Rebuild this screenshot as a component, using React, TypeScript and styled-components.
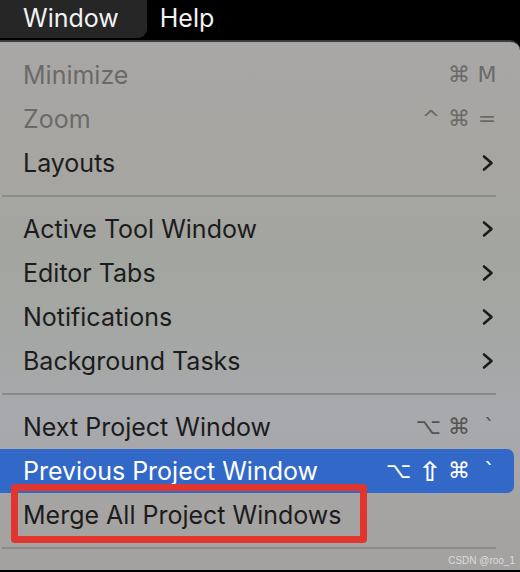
import React from 'react'
import styled, { createGlobalStyle } from 'styled-components'

const GlobalStyle = createGlobalStyle`
    html, body {
        margin: 0;
        padding: 0;
        background: #000;
    }
    body {
        font-family: 'Inter', 'Liberation Sans', sans-serif;
        -webkit-font-smoothing: antialiased;
    }
`

const Screen = styled.div`
    position: relative;
    width: 520px;
    height: 572px;
    overflow: hidden;
    background: #000;
`

const MenuBar = styled.div`
    height: 40px;
    display: flex;
    align-items: flex-start;
    background: #000;
`

const BarItem = styled.div<{ $active?: boolean }>`
    height: 38px;
    display: flex;
    align-items: center;
    padding-bottom: 2px;
    box-sizing: border-box;
    font-size: 25px;
    color: #f2f2f2;
    background: ${p => (p.$active ? '#262626' : 'transparent')};
    border-bottom-right-radius: 9px;
    padding-right: ${p => (p.$active ? '28px' : '14px')};
    padding-left: ${p => (p.$active ? '23px' : '13px')};
`

const Menu = styled.div`
    border-top: 2px solid #3a3a3c;
    border-top-right-radius: 10px;
    background: linear-gradient(
        180deg,
        #a9a7a5 0%,
        #a6a5a2 25%,
        #a3a59f 40%,
        #a6a8a8 62%,
        #a8a9ad 72%,
        #a5a4a3 88%,
        #a4a2a0 100%
    );
    padding-top: 11px;
    height: 530px;
    box-sizing: border-box;
`

const Row = styled.div<{ $disabled?: boolean; $selected?: boolean }>`
    height: 44px;
    display: flex;
    align-items: center;
    justify-content: space-between;
    padding: 0 17px 0 23px;
    margin-right: 6px;
    font-size: 25px;
    color: ${p => (p.$selected ? '#ffffff' : p.$disabled ? '#6b6a69' : '#1c1c1c')};
    background: ${p => (p.$selected ? '#3268c8' : 'transparent')};
    border-radius: ${p => (p.$selected ? '0 7px 7px 0' : '0')};
`

const Shortcut = styled.span<{ $disabled?: boolean; $selected?: boolean }>`
    display: flex;
    align-items: center;
    gap: 7px;
    font-family: 'DejaVu Sans', sans-serif;
    font-size: 22px;
    color: ${p => (p.$selected ? '#ffffff' : p.$disabled ? '#6b6a69' : '#555453')};
`

const Key = styled.span<{ $kind?: 'tick' | 'shift' }>`
    display: inline-block;
    text-align: ${p => (p.$kind === 'tick' ? 'left' : 'center')};
    min-width: ${p => (p.$kind === 'tick' ? '13px' : '20px')};
    margin-left: ${p => (p.$kind === 'tick' ? '7px' : '0')};
    font-size: ${p => (p.$kind === 'shift' ? '27px' : 'inherit')};
    font-weight: ${p => (p.$kind === 'shift' ? 'bold' : 'normal')};
    line-height: 1;
`

const Chevron = styled.svg`
    width: 14px;
    height: 18px;
    margin-right: 2px;
`

const Separator = styled.div`
    height: 2px;
    margin: 10px 24px 10px 2px;
    background: #8c8b89;
`

const Highlight = styled.div`
    position: absolute;
    left: 11px;
    top: 484px;
    width: 356px;
    height: 59px;
    box-sizing: border-box;
    border: 7px solid #e0362f;
    border-radius: 4px;
`

const Watermark = styled.div`
    position: absolute;
    right: 5px;
    bottom: 6px;
    font-family: 'Liberation Sans', sans-serif;
    font-size: 10px;
    color: #dcdcdc;
`

type Item = {
    label: string
    keys?: string[]
    submenu?: boolean
    disabled?: boolean
    selected?: boolean
}

const groups: Item[][] = [
    [
        { label: 'Minimize', keys: ['⌘', 'M'], disabled: true },
        { label: 'Zoom', keys: ['^', '⌘', '='], disabled: true },
        { label: 'Layouts', submenu: true },
    ],
    [
        { label: 'Active Tool Window', submenu: true },
        { label: 'Editor Tabs', submenu: true },
        { label: 'Notifications', submenu: true },
        { label: 'Background Tasks', submenu: true },
    ],
    [
        { label: 'Next Project Window', keys: ['⌥', '⌘', '`'] },
        { label: 'Previous Project Window', keys: ['⌥', '⇧', '⌘', '`'], selected: true },
        { label: 'Merge All Project Windows' },
    ],
]

const keyKind = (k: string) => (k === '`' ? 'tick' : k === '⇧' ? 'shift' : undefined)

const App: React.FC = () => {
    return (
        <Screen>
            <GlobalStyle />
            <MenuBar>
                <BarItem $active>Window</BarItem>
                <BarItem>Help</BarItem>
            </MenuBar>
            <Menu>
                {groups.map((group, gi) => (
                    <React.Fragment key={gi}>
                        {group.map(item => (
                            <Row key={item.label} $disabled={item.disabled} $selected={item.selected}>
                                <span>{item.label}</span>
                                {item.keys && (
                                    <Shortcut $disabled={item.disabled} $selected={item.selected}>
                                        {item.keys.map((k, i) => (
                                            <Key key={i} $kind={keyKind(k)}>{k}</Key>
                                        ))}
                                    </Shortcut>
                                )}
                                {item.submenu && (
                                    <Chevron viewBox="0 0 14 18">
                                        <path d="M3 2.5 L10.5 9 L3 15.5" fill="none" stroke="#1c1c1c" strokeWidth="2.6" strokeLinecap="round" strokeLinejoin="round" />
                                    </Chevron>
                                )}
                            </Row>
                        ))}
                        <Separator />
                    </React.Fragment>
                ))}
            </Menu>
            <Highlight />
            <Watermark>CSDN @roo_1</Watermark>
        </Screen>
    )
}

export default App
